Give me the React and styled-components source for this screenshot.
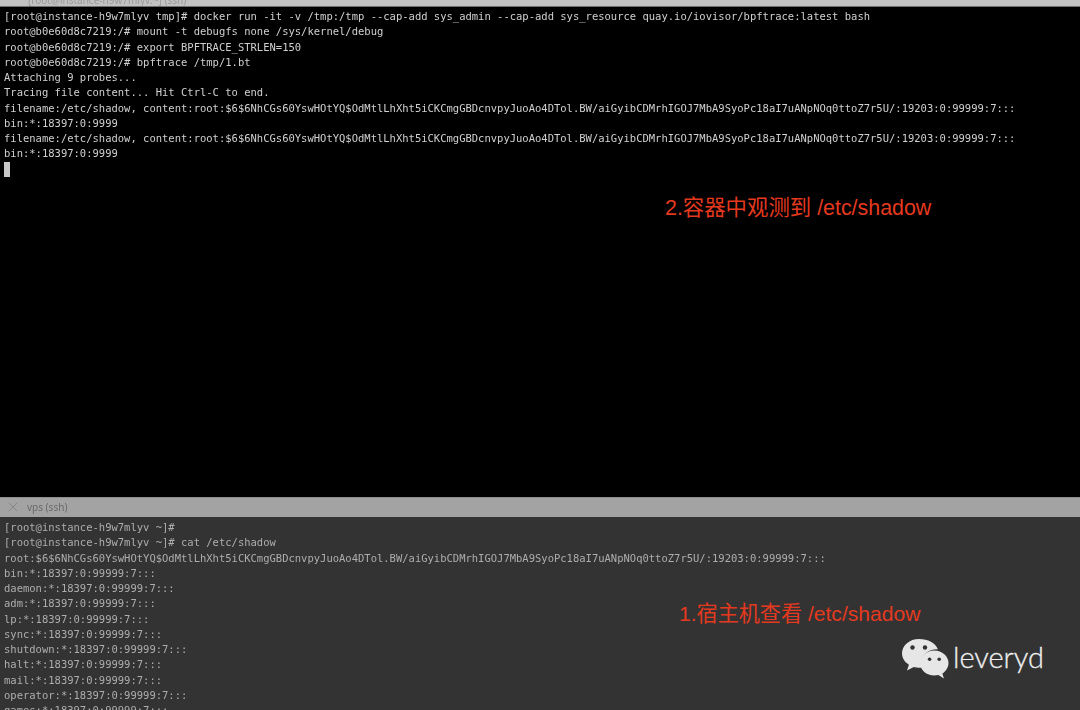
import React from "react";
import styled, { createGlobalStyle } from "styled-components";

const topLines = [
  "[root@instance-h9w7mlyv tmp]# docker run -it -v /tmp:/tmp --cap-add sys_admin --cap-add sys_resource quay.io/iovisor/bpftrace:latest bash",
  "root@b0e60d8c7219:/# mount -t debugfs none /sys/kernel/debug",
  "root@b0e60d8c7219:/# export BPFTRACE_STRLEN=150",
  "root@b0e60d8c7219:/# bpftrace /tmp/1.bt",
  "Attaching 9 probes...",
  "Tracing file content... Hit Ctrl-C to end.",
  "filename:/etc/shadow, content:root:$6$6NhCGs60YswHOtYQ$OdMtlLhXht5iCKCmgGBDcnvpyJuoAo4DTol.BW/aiGyibCDMrhIGOJ7MbA9SyoPc18aI7uANpNOq0ttoZ7r5U/:19203:0:99999:7:::",
  "bin:*:18397:0:9999",
  "filename:/etc/shadow, content:root:$6$6NhCGs60YswHOtYQ$OdMtlLhXht5iCKCmgGBDcnvpyJuoAo4DTol.BW/aiGyibCDMrhIGOJ7MbA9SyoPc18aI7uANpNOq0ttoZ7r5U/:19203:0:99999:7:::",
  "bin:*:18397:0:9999",
];

const bottomLines = [
  "[root@instance-h9w7mlyv ~]#",
  "[root@instance-h9w7mlyv ~]# cat /etc/shadow",
  "root:$6$6NhCGs60YswHOtYQ$OdMtlLhXht5iCKCmgGBDcnvpyJuoAo4DTol.BW/aiGyibCDMrhIGOJ7MbA9SyoPc18aI7uANpNOq0ttoZ7r5U/:19203:0:99999:7:::",
  "bin:*:18397:0:99999:7:::",
  "daemon:*:18397:0:99999:7:::",
  "adm:*:18397:0:99999:7:::",
  "lp:*:18397:0:99999:7:::",
  "sync:*:18397:0:99999:7:::",
  "shutdown:*:18397:0:99999:7:::",
  "halt:*:18397:0:99999:7:::",
  "mail:*:18397:0:99999:7:::",
  "operator:*:18397:0:99999:7:::",
  "games:*:18397:0:99999:7:::",
];

const WeChatIcon = () => (
  <svg width="48" height="42" viewBox="0 0 48 42">
    <path
      fill="#e6e6e6"
      d="M18 1C8.6 1 1 7.4 1 15.3c0 4.7 2.7 8.8 6.9 11.4L6 32.5l6.8-3.4c1.7.4 3.4.7 5.2.7 1 0 1.9-.1 2.8-.2-.5-1.5-.8-3-.8-4.6 0-7.6 7.2-13.7 16-13.7h.9C34.6 5.1 27 1 18 1z"
    />
    <path
      fill="#e6e6e6"
      d="M47.5 25c0-7-6.4-12.6-14.2-12.6S19.1 18 19.1 25s6.4 12.6 14.2 12.6c1.4 0 2.8-.2 4.1-.5l5.5 3.4-1.5-4.9c3.5-2.4 6.1-6.3 6.1-10.6z"
    />
    <circle cx="11.5" cy="9.5" r="2.2" fill="#333" />
    <circle cx="24" cy="9.5" r="2.2" fill="#333" />
    <circle cx="28.6" cy="21.2" r="1.8" fill="#333" />
    <circle cx="38.2" cy="21.2" r="1.8" fill="#333" />
  </svg>
);

const App = () => (
  <>
    <GlobalStyle />
    <Page>
      <TopEdge>
        <ClippedTitle>[root@instance-h9w7mlyv:~] (ssh)</ClippedTitle>
      </TopEdge>
      <TopPane>
        <Output $color="#d0d0d0">
          {topLines.map((line, i) => (
            <Line key={i}>{line}</Line>
          ))}
          <Line>
            <Cursor />
          </Line>
        </Output>
        <Note $top={187} $left={665} $size={21.4}>
          2.容器中观测到 /etc/shadow
        </Note>
      </TopPane>
      <TabBar>
        <CloseIcon viewBox="0 0 12 12">
          <path d="M1 1l10 10M11 1L1 11" />
        </CloseIcon>
        <TabTitle>vps (ssh)</TabTitle>
      </TabBar>
      <BottomPane>
        <Output $color="#adadad">
          {bottomLines.map((line, i) => (
            <Line key={i}>{line}</Line>
          ))}
        </Output>
        <Note $top={83} $left={679} $size={21.1}>
          1.宿主机查看 /etc/shadow
        </Note>
        <Watermark>
          <WeChatIcon />
          <WatermarkText>leveryd</WatermarkText>
        </Watermark>
      </BottomPane>
    </Page>
  </>
);

export default App;

const GlobalStyle = createGlobalStyle`
  html, body {
    margin: 0;
    padding: 0;
    background: #000;
    overflow: hidden;
  }
`;

const Page = styled.div`
  display: flex;
  flex-direction: column;
  width: 1080px;
  height: 710px;
  overflow: hidden;
`;

const TopEdge = styled.div`
  height: 7px;
  flex-shrink: 0;
  box-sizing: border-box;
  background: #c2c2c2;
  border-bottom: 1px solid #6e6e6e;
  overflow: hidden;
  display: flex;
  align-items: flex-start;
  padding-left: 28px;
`;

const ClippedTitle = styled.span`
  height: 6px;
  font: 10px/0 "Noto Sans", sans-serif;
  color: #9a9a9a;
  filter: blur(0.6px);
`;

const TopPane = styled.div`
  position: relative;
  height: 490px;
  flex-shrink: 0;
  background: #000;
  padding: 2px 0 0 4px;
  box-sizing: border-box;
`;

const Output = styled.div`
  font-family: "DejaVu Sans Mono", "Liberation Mono", monospace;
  font-size: 10.5px;
  line-height: 15.25px;
  color: ${(p) => p.$color};
  white-space: pre;
  filter: blur(0.4px);
`;

const Line = styled.div`
  height: 15.25px;
`;

const Cursor = styled.span`
  display: block;
  width: 6px;
  height: 15px;
  background: #c8c8c8;
`;

const Note = styled.div`
  position: absolute;
  top: ${(p) => p.$top}px;
  left: ${(p) => p.$left}px;
  font-family: "Liberation Sans", "Noto Sans CJK SC", sans-serif;
  font-size: ${(p) => p.$size}px;
  line-height: 28px;
  color: #e5391f;
  white-space: nowrap;
`;

const TabBar = styled.div`
  display: flex;
  align-items: center;
  gap: 9px;
  height: 20px;
  flex-shrink: 0;
  padding-left: 8px;
  padding-bottom: 1px;
  background: #a3a3a3;
  border-top: 1px solid #8e8e8e;
  box-sizing: border-box;
`;

const CloseIcon = styled.svg`
  width: 10px;
  height: 10px;
  fill: none;
  stroke: #878787;
  stroke-width: 1.2;
`;

const TabTitle = styled.span`
  font: 10px "Noto Sans", sans-serif;
  color: #6a6a6a;
  filter: blur(0.3px);
`;

const BottomPane = styled.div`
  position: relative;
  flex: 1;
  background: #333;
  padding: 3px 0 0 4px;
  overflow: hidden;
`;

const Watermark = styled.div`
  position: absolute;
  top: 121px;
  left: 901px;
  display: flex;
  align-items: center;
  gap: 4px;
`;

const WatermarkText = styled.span`
  padding-bottom: 5px;
  font: 300 29px "Lato", "Noto Sans", sans-serif;
  color: #eeeeee;
  -webkit-text-stroke: 0.3px #eeeeee;
`;
